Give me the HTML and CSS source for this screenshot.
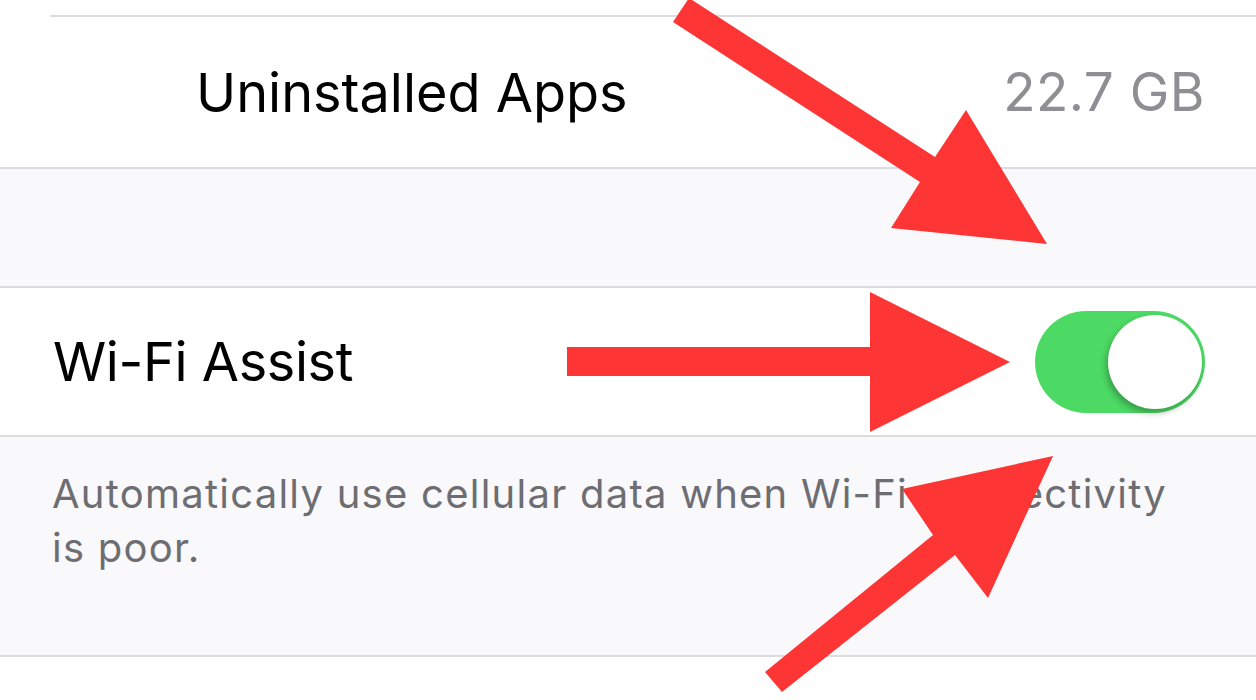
FILE: index.html
```html
<!DOCTYPE html>
<html lang="en">
<head>
    <meta charset="UTF-8">
    <meta name="viewport" content="width=device-width, initial-scale=1.0">
    <title>Wi-Fi Assist</title>
    <link rel="stylesheet" href="styles.css">
</head>
<body>
    <div class="page">
        <div class="section section-top">
            <div class="inset-line"></div>
            <div class="cell cell-sub">
                <span class="cell-title">Uninstalled Apps</span>
                <span class="cell-value">22.7 GB</span>
            </div>
        </div>

        <div class="spacer"></div>

        <div class="section">
            <div class="cell">
                <span class="cell-title">Wi-Fi Assist</span>
                <div class="switch on"><span class="knob"></span></div>
            </div>
        </div>

        <div class="footer-note">
            <p>Automatically use cellular data when Wi-Fi connectivity is poor.</p>
        </div>

        <!-- annotation arrows drawn over the screenshot -->
        <svg class="arrows" width="1256" height="700" viewBox="0 0 1256 700">
            <polygon points="689,-2 935,157 966,110 1047,244 891,228 920,182 673,22"/>
            <polygon points="567,347 870,347 870,292 1010,362 870,432 870,376 567,376"/>
            <polygon points="765,672 933,535 902,489 1053,456 988,598 955,555 782,692"/>
        </svg>
    </div>
</body>
</html>
```

FILE: styles.css
```css
body {
    margin: 0;
    font-family: 'Inter', 'Liberation Sans', sans-serif;
    background: #fff;
    color: #000;
}
.page {
    position: relative;
    width: 1256px;
    height: 700px;
    overflow: hidden;
}
.section {
    background: #fff;
    border-top: 2px solid #dcdce0;
    border-bottom: 2px solid #dcdce0;
}
.section-top {
    border-top: none;
    padding-top: 15px;
}
.inset-line {
    margin-left: 50px;
    height: 2px;
    background: #dcdce0;
}
.cell {
    display: flex;
    align-items: center;
    justify-content: space-between;
    height: 147px;
    padding: 0 51px 0 53px;
}
.cell-sub {
    height: 150px;
    padding-left: 196px;
}
.cell-title {
    font-size: 54px;
    letter-spacing: -0.4px;
}
.cell-sub .cell-title {
    letter-spacing: 0;
}
.cell-value {
    font-size: 53px;
    color: #8e8e93;
    letter-spacing: 0.5px;
}
.spacer {
    height: 117px;
    background: #f9f9fb;
}
.switch {
    width: 170px;
    height: 102px;
    border-radius: 51px;
    background: #4cd964;
    display: flex;
    align-items: center;
    justify-content: flex-end;
    padding: 0 3px;
    box-sizing: border-box;
}
.knob {
    width: 94px;
    height: 94px;
    border-radius: 50%;
    background: #fff;
    box-shadow: -2px 4px 6px rgba(0, 0, 0, 0.28);
}
.footer-note {
    height: 220px;
    box-sizing: border-box;
    background: #f9f9fb;
    border-bottom: 2px solid #dcdce0;
    padding: 30px 60px 0 52px;
}
.footer-note p {
    margin: 0;
    font-size: 40px;
    line-height: 54px;
    letter-spacing: 1.25px;
    color: #6d6d72;
}
.arrows {
    position: absolute;
    top: 0;
    left: 0;
}
.arrows polygon {
    fill: #fd3535;
}
```
